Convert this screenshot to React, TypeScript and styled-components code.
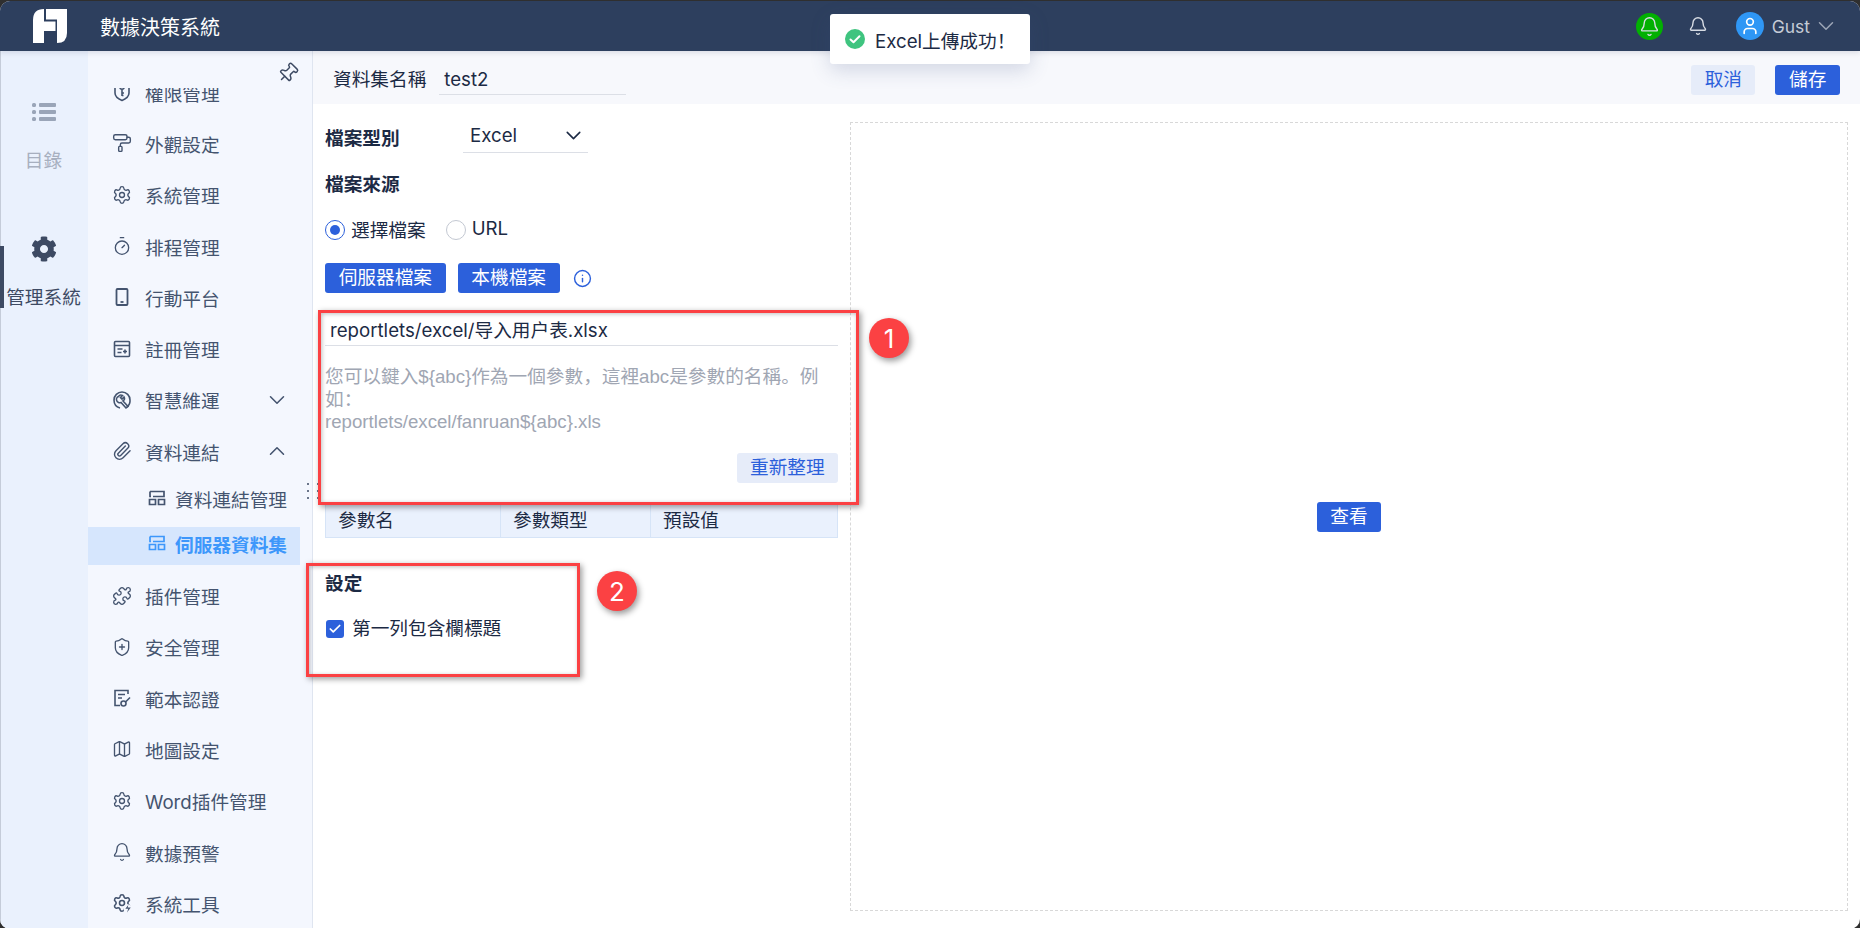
import React from 'react';
import styled, { createGlobalStyle } from 'styled-components';
import {
  Bell,
  Check,
  ChevronDown,
  ChevronUp,
  Info,
  Map as MapIcon,
  PaintRoller,
  Paperclip,
  Pin,
  Puzzle,
  Settings,
  ShieldPlus,
  Timer,
  User,
} from 'lucide-react';
import { FaCog } from 'react-icons/fa';

const FONT = 'Inter, "Noto Sans CJK SC", sans-serif';

const GlobalStyle = createGlobalStyle`
  html, body {
    margin: 0;
    padding: 0;
    background: #2f2f2f;
    overflow: hidden;
  }
  * {
    box-sizing: border-box;
  }
`;

const ShieldKeyIcon = () => (
  <svg viewBox="0 0 20 20" width="20" height="20" fill="none" stroke="currentColor" strokeWidth="1.6">
    <path d="M3 2v9c0 4 3.5 6 7 7.5 3.500-1.500 7-3.500 7-7.500V2" />
    <circle cx="10" cy="5" r="2.200" />
    <path d="M10 7.200V14M10 11h2M10 13.500h1.500" />
  </svg>
);

const PhoneIcon = () => (
  <svg viewBox="0 0 20 20" width="20" height="20" fill="none" stroke="currentColor" strokeWidth="1.8">
    <rect x="4.500" y="2" width="11" height="16" rx="1" />
    <path d="M8.500 15h3" />
  </svg>
);

const RegisterIcon = () => (
  <svg viewBox="0 0 20 20" width="20" height="20" fill="none" stroke="currentColor" strokeWidth="1.6">
    <rect x="2.500" y="2.500" width="15" height="15" rx="1" />
    <path d="M2.500 6.500h15M5.500 10h5M5.500 13.500h4M13 10.500v4M11 12.500h4" />
  </svg>
);

const WrenchCircleIcon = () => (
  <svg viewBox="0 0 20 20" width="20" height="20" fill="none" stroke="currentColor" strokeWidth="1.6">
    <path d="M10 2a8 8 0 0 0-8 8c0 4 2.500 7 6 8M15 17a8 8 0 0 0 3-7c0-4.500-3.500-8-8-8" />
    <path d="M6.500 6.500a3 3 0 0 1 4-1l-2 2 1.500 1.500 2-2a3 3 0 0 1-1 4l5 5.500-2 1.500-5-5.500a3 3 0 0 1-2.500-6z" />
  </svg>
);

const ServerIcon = () => (
  <svg viewBox="0 0 20 20" width="20" height="20" fill="none" stroke="currentColor" strokeWidth="1.7">
    <path d="M3 3.500h14v5H6" />
    <path d="M2.500 11.500h6v5h-6zM11.500 11.500h6v5h-6z" />
    <path d="M3 3.500v5h1" />
  </svg>
);

const DocKeyIcon = () => (
  <svg viewBox="0 0 20 20" width="20" height="20" fill="none" stroke="currentColor" strokeWidth="1.6">
    <path d="M16 6V2.500H3v15h5" />
    <path d="M6 6.500h7M6 10h4" />
    <circle cx="11.500" cy="15.500" r="2.500" />
    <path d="M13.500 14l4.500-4.500" />
  </svg>
);

const SettingsBoltIcon = () => (
  <svg viewBox="0 0 24 24" width="20" height="20" fill="none" stroke="currentColor" strokeWidth="1.900">
    <path d="M9.671 4.136a2.340 2.340 0 0 1 4.659 0 2.340 2.340 0 0 0 3.319 1.915 2.340 2.340 0 0 1 2.330 4.033 2.340 2.340 0 0 0 0 3.831 2.340 2.340 0 0 1-2.330 4.033 2.340 2.340 0 0 0-3.319 1.915 2.340 2.340 0 0 1-4.659 0 2.340 2.340 0 0 0-3.320-1.915 2.340 2.340 0 0 1-2.330-4.033 2.340 2.340 0 0 0 0-3.831A2.340 2.340 0 0 1 6.350 6.051a2.340 2.340 0 0 0 3.319-1.915" />
    <circle cx="12" cy="12" r="3" />
    <circle cx="18.500" cy="18.500" r="5" fill="#f4f7fe" stroke="none" />
    <path d="M19.500 14.500l-3.500 4.500h3.500l-1.500 4.500 4.500-6h-3.500z" fill="currentColor" stroke="none" />
  </svg>
);

const ListIcon = () => (
  <svg viewBox="0 0 24 20" width="24" height="20" fill="#9aa5b8">
    <rect x="0" y="1" width="4" height="4" rx="1.500" />
    <rect x="0" y="8" width="4" height="4" rx="1.500" />
    <rect x="0" y="15" width="4" height="4" rx="1.500" />
    <rect x="7" y="1" width="17" height="4" rx="1" />
    <rect x="7" y="8" width="17" height="4" rx="1" />
    <rect x="7" y="15" width="17" height="4" rx="1" />
  </svg>
);

const LogoIcon = () => (
  <svg viewBox="0 0 34 34" width="34" height="34" fill="#fff">
    <path d="M0 11Q0 0 11 0V12.500H22.500V22H11V34H0Z" />
    <path d="M13 0H34V24Q34 34 24 34V10.500H13Z" />
  </svg>
);

const SuccessIcon = () => (
  <svg viewBox="0 0 20 20" width="20" height="20">
    <circle cx="10" cy="10" r="10" fill="#3fc47f" />
    <path d="M5.500 10.500l3 2.800 6-6" fill="none" stroke="#fff" strokeWidth="2" strokeLinecap="round" strokeLinejoin="round" />
  </svg>
);

const Window = styled.div`
  position: relative;
  width: 1860px;
  height: 928px;
  margin-top: 1px;
  border-radius: 10px;
  overflow: hidden;
  background: #fff;
  display: flex;
  flex-direction: column;
  font-family: ${FONT};
  font-size: 18.67px;
  color: #1c2a44;
`;

const Header = styled.header`
  position: relative;
  z-index: 2;
  flex: 0 0 50px;
  display: flex;
  align-items: center;
  padding: 0 21px 0 33px;
  background: #2d3f5e;
  box-shadow: 0 2px 5px rgba(30, 40, 70, 0.12);
`;

const LogoBox = styled.div`
  display: flex;
  width: 34px;
  height: 34px;
`;

const Title = styled.div`
  margin-left: 33px;
  font-size: 20px;
  color: #fff;
`;

const HeaderRight = styled.div`
  margin-left: auto;
  display: flex;
  align-items: center;
  color: #d6dbe3;
`;

const AlertBell = styled.div`
  width: 27px;
  height: 27px;
  border-radius: 50%;
  background: #02b002;
  display: flex;
  align-items: center;
  justify-content: center;
  margin-right: 25px;
`;

const PlainBell = styled.div`
  display: flex;
  margin-right: 28px;
`;

const Avatar = styled.div`
  width: 28px;
  height: 28px;
  border-radius: 50%;
  background: #2f97f5;
  color: #fff;
  display: flex;
  align-items: center;
  justify-content: center;
`;

const UserName = styled.span`
  margin: 0 3px 0 8px;
  font-size: 17.5px;
  color: #c5cbd6;
`;

const Body = styled.div`
  flex: 1;
  min-height: 0;
  display: flex;
  border-left: 1px solid #c5ccd9;
`;

const Rail = styled.nav`
  flex: 0 0 87px;
  padding: 16px 2px 0 0;
  background: #eaf1fd;
`;

const RailItem = styled.div<{ $active?: boolean }>`
  position: relative;
  height: 137px;
  display: flex;
  flex-direction: column;
  align-items: center;
  justify-content: center;
  gap: 20px;
  color: ${(p) => (p.$active ? '#3d4a63' : '#a7afbf')};
`;

const RailIcon = styled.div`
  height: 26px;
  display: flex;
  align-items: center;
`;

const RailMarker = styled.span`
  position: absolute;
  left: -1px;
  top: 42px;
  width: 4px;
  height: 62px;
  background: #3d4a63;
`;

const MenuPanel = styled.aside`
  flex: 0 0 225px;
  display: flex;
  flex-direction: column;
  background: #f4f7fe;
  border-right: 1px solid #dfe5f0;
  color: #44546f;
`;

const PinRow = styled.div`
  flex: 0 0 37px;
  display: flex;
  justify-content: flex-end;
  padding: 11px 13px 0 0;
  color: #3d4a63;
`;

const PinIcon = styled(Pin)`
  transform: rotate(45deg);
`;

const MenuScroll = styled.div`
  flex: 1;
  min-height: 0;
  overflow: hidden;
`;

const MenuList = styled.div`
  margin-top: -21.500px;
  width: 212px;
`;

const MenuRow = styled.div`
  height: 51.300px;
  display: flex;
  align-items: center;
  gap: 13px;
  padding: 0 10px 0 24px;
`;

const MenuIcon = styled.span`
  display: flex;
  width: 20px;
  justify-content: center;
`;

const MenuChevron = styled.span`
  display: flex;
  margin-left: auto;
`;

const SubGroup = styled.div`
  display: flex;
  flex-direction: column;
  gap: 7px;
  padding: 5px 0 5px;
`;

const SubRow = styled.div<{ $active?: boolean }>`
  height: 38px;
  display: flex;
  align-items: center;
  gap: 8px;
  padding: 0 0 5px 59px;
  background: ${(p) => (p.$active ? '#d6e6fd' : 'transparent')};
  color: ${(p) => (p.$active ? '#3d97fb' : 'inherit')};
  font-weight: ${(p) => (p.$active ? 700 : 400)};
`;

const DragDots = styled.div`
  position: absolute;
  left: 307px;
  top: 482px;
  z-index: 3;
  display: grid;
  grid-template-columns: repeat(2, 2px);
  grid-auto-rows: 2px;
  gap: 5px 8px;
  span {
    background: #3d4a63;
    border-radius: 50%;
  }
`;

const Main = styled.main`
  flex: 1;
  min-width: 0;
  display: flex;
  flex-direction: column;
`;

const TopBar = styled.div`
  flex: 0 0 53px;
  display: flex;
  padding: 14px 20px 0 20px;
  background: #f7f8fc;
`;

const NameLabel = styled.label`
  line-height: 30px;
`;

const NameInput = styled.div`
  width: 187px;
  height: 30px;
  margin-left: 13px;
  padding-left: 5px;
  line-height: 29px;
  border-bottom: 1px solid #dcdfe6;
`;

const Button = styled.button`
  height: 30px;
  padding: 0 13.700px;
  border: none;
  border-radius: 3px;
  font: inherit;
  line-height: 30px;
  white-space: nowrap;
  background: #2c60db;
  color: #fff;
`;

const SoftButton = styled(Button)`
  padding: 0 13.330px;
  background: #e6ecf9;
  color: #2c60db;
`;

const TopActions = styled.div`
  margin-left: auto;
  display: flex;
  gap: 20px;
`;

const Content = styled.div`
  flex: 1;
  min-height: 0;
  display: flex;
`;

const FormColumn = styled.section`
  position: relative;
  flex: 0 0 537px;
  padding: 20px 12px 0 12px;
`;

const FieldRow = styled.div`
  display: flex;
  align-items: center;
`;

const FieldLabel = styled.div<{ $wide?: boolean }>`
  font-weight: 700;
  line-height: 24px;
  width: ${(p) => (p.$wide ? '138px' : 'auto')};
`;

const SelectBox = styled.div`
  width: 125px;
  height: 30px;
  margin-top: -1px;
  padding: 0 2px 5px 7px;
  display: flex;
  align-items: center;
  justify-content: space-between;
  border-bottom: 1px solid #dcdfe6;
`;

const SourceHead = styled.div`
  margin-top: 20px;
`;

const RadioRow = styled.div`
  margin-top: 21px;
  height: 24px;
  display: flex;
  align-items: center;
`;

const RadioMark = styled.span<{ $checked?: boolean }>`
  width: 20px;
  height: 20px;
  border-radius: 50%;
  border: 1px solid ${(p) => (p.$checked ? '#2c60db' : '#c3c8d2')};
  display: flex;
  align-items: center;
  justify-content: center;
  margin-right: 6px;
  &::after {
    content: '';
    width: 10px;
    height: 10px;
    border-radius: 50%;
    background: ${(p) => (p.$checked ? '#2c60db' : 'transparent')};
  }
`;

const RadioText = styled.span`
  margin: -3px 20px 0 0;
`;

const SourceButtons = styled.div`
  margin-top: 21px;
  display: flex;
  align-items: center;
  gap: 12px;
`;

const InfoMark = styled.span`
  display: flex;
  margin-left: 1px;
  color: #2c60db;
`;

const PathInput = styled.div`
  margin-top: 24px;
  height: 29px;
  padding-left: 5px;
  line-height: 28px;
  border-bottom: 1px solid #dcdfe6;
`;

const Hint = styled.p`
  margin: 20px 0 0;
  font-family: "Liberation Sans", "Noto Sans CJK SC", sans-serif;
  line-height: 22.500px;
  color: #a0a6b3;
`;

const RefreshRow = styled.div`
  margin-top: 19px;
  display: flex;
  justify-content: flex-end;
`;

const ParamTable = styled.div`
  margin-top: 21px;
  display: grid;
  grid-template-columns: 174px 150px 1fr;
  height: 34px;
  background: #eaf1fd;
  border: 1px solid #d6e4f7;
`;

const ParamHead = styled.div`
  display: flex;
  align-items: center;
  padding: 0 0 5px 12px;
  & + & {
    border-left: 1px solid #d6e4f7;
  }
`;

const SettingHead = styled.div`
  margin-top: 34px;
`;

const CheckRow = styled.div`
  margin-top: 21px;
  height: 24px;
  display: flex;
  align-items: center;
  gap: 8px;
`;

const CheckMark = styled.span`
  width: 18px;
  height: 18px;
  margin-left: 1px;
  border-radius: 3px;
  background: #2c60db;
  color: #fff;
  display: flex;
  align-items: center;
  justify-content: center;
`;

const CheckText = styled.span`
  margin-top: -4px;
`;

const Callout = styled.div<{ $left: number; $top: number; $w: number; $h: number }>`
  position: absolute;
  left: ${(p) => p.$left}px;
  top: ${(p) => p.$top}px;
  width: ${(p) => p.$w}px;
  height: ${(p) => p.$h}px;
  border: 3px solid #fb4143;
  box-shadow: 2px 2px 6px rgba(0, 0, 0, 0.4), inset 1px 1px 4px rgba(0, 0, 0, 0.25);
  pointer-events: none;
  z-index: 4;
`;

const Badge = styled.div<{ $left: number; $top: number }>`
  position: absolute;
  left: ${(p) => p.$left}px;
  top: ${(p) => p.$top}px;
  width: 40px;
  height: 40px;
  border-radius: 50%;
  background: #fb4143;
  color: #fff;
  font-size: 26px;
  display: flex;
  align-items: center;
  justify-content: center;
  box-shadow: 2px 3px 6px rgba(0, 0, 0, 0.4);
  z-index: 4;
`;

const Preview = styled.section`
  flex: 1;
  margin: 18px 12px 18px 0;
  border: 1px dashed #d8d8d8;
  display: flex;
  align-items: center;
  justify-content: center;
`;

const Toast = styled.div`
  position: absolute;
  left: 830px;
  top: 13px;
  width: 200px;
  height: 50px;
  z-index: 5;
  display: flex;
  align-items: center;
  gap: 10px;
  padding-left: 15px;
  background: #fff;
  border-radius: 3px;
  box-shadow: 0 6px 20px rgba(60, 80, 130, 0.2);
`;

const menuTop = [
  { label: '權限管理', icon: <ShieldKeyIcon /> },
  { label: '外觀設定', icon: <PaintRoller size={20} strokeWidth={1.7} /> },
  { label: '系統管理', icon: <Settings size={20} strokeWidth={1.6} /> },
  { label: '排程管理', icon: <Timer size={20} strokeWidth={1.6} /> },
  { label: '行動平台', icon: <PhoneIcon /> },
  { label: '註冊管理', icon: <RegisterIcon /> },
];

const menuBottom = [
  { label: '插件管理', icon: <Puzzle size={20} strokeWidth={1.6} /> },
  { label: '安全管理', icon: <ShieldPlus size={20} strokeWidth={1.6} /> },
  { label: '範本認證', icon: <DocKeyIcon /> },
  { label: '地圖設定', icon: <MapIcon size={20} strokeWidth={1.6} /> },
  { label: 'Word插件管理', icon: <Settings size={20} strokeWidth={1.6} /> },
  { label: '數據預警', icon: <Bell size={20} strokeWidth={1.6} /> },
  { label: '系統工具', icon: <SettingsBoltIcon /> },
];

const SideMenu = () => (
  <MenuPanel>
    <PinRow>
      <PinIcon size={22} strokeWidth={1.6} />
    </PinRow>
    <MenuScroll>
      <MenuList>
        {menuTop.map((item) => (
          <MenuRow key={item.label}>
            <MenuIcon>{item.icon}</MenuIcon>
            {item.label}
          </MenuRow>
        ))}
        <MenuRow>
          <MenuIcon>
            <WrenchCircleIcon />
          </MenuIcon>
          智慧維運
          <MenuChevron>
            <ChevronDown size={26} strokeWidth={1.4} />
          </MenuChevron>
        </MenuRow>
        <MenuRow>
          <MenuIcon>
            <Paperclip size={20} strokeWidth={1.7} />
          </MenuIcon>
          資料連結
          <MenuChevron>
            <ChevronUp size={26} strokeWidth={1.4} />
          </MenuChevron>
        </MenuRow>
        <SubGroup>
          <SubRow>
            <ServerIcon />
            資料連結管理
          </SubRow>
          <SubRow $active>
            <ServerIcon />
            伺服器資料集
          </SubRow>
        </SubGroup>
        {menuBottom.map((item) => (
          <MenuRow key={item.label}>
            <MenuIcon>{item.icon}</MenuIcon>
            {item.label}
          </MenuRow>
        ))}
      </MenuList>
    </MenuScroll>
  </MenuPanel>
);

const Form = () => (
  <FormColumn>
    <FieldRow>
      <FieldLabel $wide>檔案型別</FieldLabel>
      <SelectBox>
        Excel
        <ChevronDown size={25} strokeWidth={1.5} />
      </SelectBox>
    </FieldRow>
    <SourceHead>
      <FieldLabel>檔案來源</FieldLabel>
    </SourceHead>
    <RadioRow>
      <RadioMark $checked />
      <RadioText>選擇檔案</RadioText>
      <RadioMark />
      <RadioText>URL</RadioText>
    </RadioRow>
    <SourceButtons>
      <Button>伺服器檔案</Button>
      <Button>本機檔案</Button>
      <InfoMark>
        <Info size={19} strokeWidth={1.8} />
      </InfoMark>
    </SourceButtons>
    <PathInput>reportlets/excel/导入用户表.xlsx</PathInput>
    <Hint>
      您可以鍵入{'${abc}'}作為一個參數，這裡abc是參數的名稱。例如：
      <br />
      reportlets/excel/fanruan{'${abc}'}.xls
    </Hint>
    <RefreshRow>
      <SoftButton>重新整理</SoftButton>
    </RefreshRow>
    <ParamTable>
      <ParamHead>參數名</ParamHead>
      <ParamHead>參數類型</ParamHead>
      <ParamHead>預設值</ParamHead>
    </ParamTable>
    <SettingHead>
      <FieldLabel>設定</FieldLabel>
    </SettingHead>
    <CheckRow>
      <CheckMark>
        <Check size={14} strokeWidth={3} />
      </CheckMark>
      <CheckText>第一列包含欄標題</CheckText>
    </CheckRow>
    <Callout $left={5} $top={206} $w={541} $h={195} />
    <Badge $left={556} $top={214}>1</Badge>
    <Callout $left={-7} $top={459} $w={274} $h={114} />
    <Badge $left={284} $top={467}>2</Badge>
  </FormColumn>
);

export default function App() {
  return (
    <>
      <GlobalStyle />
      <Window>
        <Header>
          <LogoBox>
            <LogoIcon />
          </LogoBox>
          <Title>數據決策系統</Title>
          <HeaderRight>
            <AlertBell>
              <Bell size={21} strokeWidth={1.6} />
            </AlertBell>
            <PlainBell>
              <Bell size={20} strokeWidth={1.7} />
            </PlainBell>
            <Avatar>
              <User size={20} strokeWidth={2} />
            </Avatar>
            <UserName>Gust</UserName>
            <ChevronDown size={26} strokeWidth={1.4} color="#9aa4b5" />
          </HeaderRight>
        </Header>
        <Body>
          <Rail>
            <RailItem>
              <RailIcon>
                <ListIcon />
              </RailIcon>
              目錄
            </RailItem>
            <RailItem $active>
              <RailMarker />
              <RailIcon>
                <FaCog size={26} />
              </RailIcon>
              管理系統
            </RailItem>
          </Rail>
          <SideMenu />
          <Main>
            <TopBar>
              <NameLabel>資料集名稱</NameLabel>
              <NameInput>test2</NameInput>
              <TopActions>
                <SoftButton>取消</SoftButton>
                <Button>儲存</Button>
              </TopActions>
            </TopBar>
            <Content>
              <Form />
              <Preview>
                <Button>查看</Button>
              </Preview>
            </Content>
          </Main>
        </Body>
        <DragDots>
          {Array.from({ length: 6 }, (_, i) => (
            <span key={i} />
          ))}
        </DragDots>
        <Toast>
          <SuccessIcon />
          Excel上傳成功！
        </Toast>
      </Window>
    </>
  );
}
